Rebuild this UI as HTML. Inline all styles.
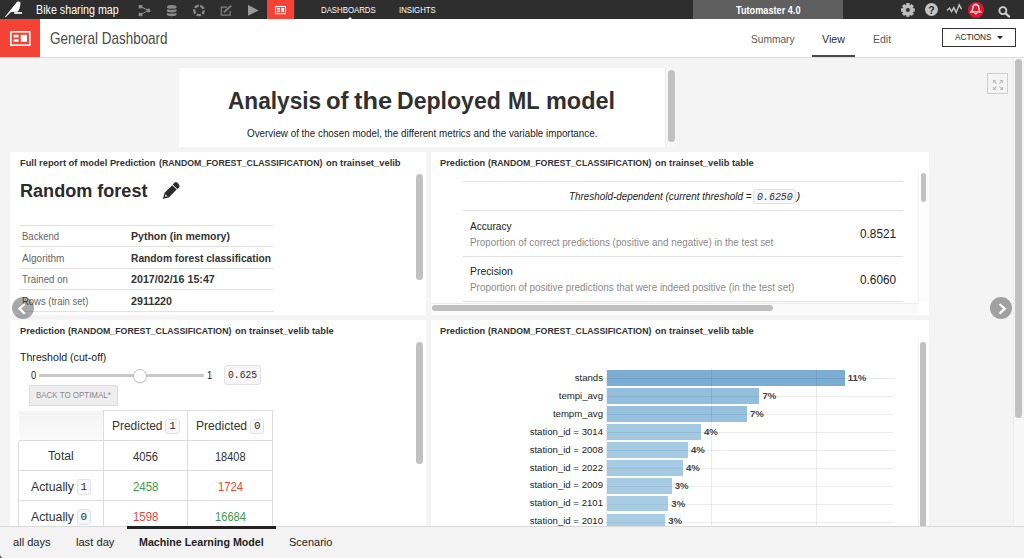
<!DOCTYPE html>
<html lang="en"><head><meta charset="utf-8"><title>General Dashboard - Bike sharing map</title>
<style>
html,body{margin:0;padding:0}
body{width:1024px;height:558px;overflow:hidden;position:relative;background:#f4f4f4;font-family:"Liberation Sans",sans-serif;color:#333}
.t{position:absolute;white-space:nowrap;line-height:1;display:block}
.abs,.hl,.hl2,.hl3,.vl,.vl3,.bar,.tile,.sb,.code,.cmbg{position:absolute}
#topbar{position:absolute;left:0;top:0;width:1024px;height:19px;background:#2e2e2e}
#hdr{position:absolute;left:0;top:19px;width:1024px;height:38px;background:#fff;border-bottom:1px solid #dcdcdc}
.tile{background:#fff}
.hl{height:1px;background:#e2e2e2;margin-top:-.5px}
.hl2{height:1px;background:#ebebeb}
.vl{width:1px;background:rgba(0,0,0,.08)}
.hl3{height:1px;background:#ddd;margin-top:-.5px}
.vl3{width:1px;background:#ddd;margin-left:-.5px}
.bar{height:15.7px}
.bar i{position:absolute;left:0;right:0;top:8.1px;height:1px;background:rgba(0,0,40,.06)}
.sb{background:#c1c1c1;border-radius:4px}
.code{background:#f7f7f9;border:1px solid #e1e1e8;border-radius:3px;box-sizing:border-box}
.cmbg{background:linear-gradient(#f4f4f4,#fafafa)}
svg{position:absolute;overflow:visible}
</style></head><body>

<!-- ===== main content ===== -->
<div id="main">
 <div class="tile" style="left:179px;top:68px;width:486px;height:79px"></div>
 <div class="abs" style="left:665px;top:68px;width:12px;height:79px;background:#f6f6f6;border-left:1px solid #ececec;box-sizing:border-box"></div>
 <div class="sb" style="left:668px;top:70px;width:6.5px;height:72px"></div>
 <span class="t" style='left:228.00px;top:89.93px;font-size:23px;font-weight:700;color:#303030;transform:scaleX(0.9840);transform-origin:0 50%;'>Analysis</span><span class="t" style='left:326.10px;top:89.93px;font-size:23px;font-weight:700;color:#303030;transform:scaleX(1.0406);transform-origin:0 50%;'>of</span><span class="t" style='left:353.70px;top:89.93px;font-size:23px;font-weight:700;color:#303030;transform:scaleX(1.1043);transform-origin:0 50%;'>the</span><span class="t" style='left:397.20px;top:89.93px;font-size:23px;font-weight:700;color:#303030;transform:scaleX(1.0036);transform-origin:0 50%;'>Deployed</span><span class="t" style='left:508.10px;top:89.93px;font-size:23px;font-weight:700;color:#303030;transform:scaleX(0.9513);transform-origin:0 50%;'>ML</span><span class="t" style='left:546.10px;top:89.93px;font-size:23px;font-weight:700;color:#303030;transform:scaleX(1.0202);transform-origin:0 50%;'>model</span>
 <span class="t" style='left:247.00px;top:127.89px;font-size:11px;color:#222;transform:scaleX(0.8931);transform-origin:0 50%;'>Overview of the chosen model, the different metrics and the variable importance.</span>

 <!-- fullscreen button -->
 <div class="abs" style="left:987px;top:73px;width:21px;height:21px;border:1px solid #cfcfcf;box-sizing:border-box"></div>
 <svg style="left:992.6px;top:79.6px" width="10" height="10" viewBox="0 0 10 10" fill="none" stroke="#bdbdbd" stroke-width="1.1"><path d="M0.5 3V0.5H3M0.5 0.5L3.6 3.6M7 0.5H9.5V3M9.5 0.5L6.4 3.6M0.5 7V9.5H3M0.5 9.5L3.6 6.4M7 9.5H9.5V7M9.5 9.5L6.4 6.4"/></svg>

 <!-- tile 1 -->
 <div class="tile" style="left:10.3px;top:152px;width:415.7px;height:163px"></div>
 <span class="t" style='left:19.80px;top:158.00px;font-size:9.8px;font-weight:700;transform:scaleX(0.9494);transform-origin:0 50%;'>Full report of model Prediction</span><span class="t" style='left:158.90px;top:158.00px;font-size:9.8px;font-weight:700;transform:scaleX(0.8943);transform-origin:0 50%;'>(RANDOM_FOREST_CLASSIFICATION)</span><span class="t" style='left:326.10px;top:158.00px;font-size:9.8px;font-weight:700;transform:scaleX(0.9581);transform-origin:0 50%;'>on trainset_velib</span>
 <span class="t" style='left:19.60px;top:182.50px;font-size:17.6px;font-weight:700;color:#2b2b2b;transform:scaleX(1.0269);transform-origin:0 50%;'>Random forest</span>
 <svg style="left:155px;top:175px" width="30" height="30" viewBox="155 175 30 30"><g transform="translate(162.9,198.9) rotate(-45)" fill="#2b2b2b"><path d="M0 0L5.6 -3.15H16.3V3.15H5.6Z"/><path d="M17.1 -3.15H19.6Q21.6 -3.15 21.6 -1.15V1.15Q21.6 3.15 19.6 3.15H17.1Z"/><path d="M2.9 0L5.2 -1.3V1.3Z" fill="#fff"/></g></svg>
 <div class="hl" style="left:19px;top:225.0px;width:254.5px"></div><span class="t" style='left:22.00px;top:231.19px;font-size:11px;color:#666;transform:scaleX(0.8666);transform-origin:0 50%;'>Backend</span><span class="t" style='left:130.50px;top:231.19px;font-size:11px;font-weight:700;transform:scaleX(0.9584);transform-origin:0 50%;'>Python (in memory)</span><div class="hl" style="left:19px;top:246.4px;width:254.5px"></div><span class="t" style='left:22.00px;top:252.59px;font-size:11px;color:#666;transform:scaleX(0.9146);transform-origin:0 50%;'>Algorithm</span><span class="t" style='left:130.50px;top:252.59px;font-size:11px;font-weight:700;transform:scaleX(0.9317);transform-origin:0 50%;'>Random forest classification</span><div class="hl" style="left:19px;top:268.0px;width:254.5px"></div><span class="t" style='left:22.00px;top:274.19px;font-size:11px;color:#666;transform:scaleX(0.8814);transform-origin:0 50%;'>Trained on</span><span class="t" style='left:130.50px;top:274.19px;font-size:11px;font-weight:700;transform:scaleX(0.9716);transform-origin:0 50%;'>2017/02/16 15:47</span><div class="hl" style="left:19px;top:289.5px;width:254.5px"></div><span class="t" style='left:22.00px;top:295.69px;font-size:11px;color:#666;transform:scaleX(0.8607);transform-origin:0 50%;'>Rows (train set)</span><span class="t" style='left:130.50px;top:295.69px;font-size:11px;font-weight:700;transform:scaleX(0.9711);transform-origin:0 50%;'>2911220</span><div class="hl" style="left:19px;top:311.2px;width:254.5px"></div>
 <div class="sb" style="left:416px;top:173.5px;width:6.5px;height:106px"></div>

 <!-- tile 2 -->
 <div class="tile" style="left:431px;top:152px;width:498.3px;height:163px"></div>
 <span class="t" style='left:439.90px;top:158.10px;font-size:9.8px;font-weight:700;transform:scaleX(0.9435);transform-origin:0 50%;'>Prediction</span><span class="t" style='left:488.30px;top:158.10px;font-size:9.8px;font-weight:700;transform:scaleX(0.8943);transform-origin:0 50%;'>(RANDOM_FOREST_CLASSIFICATION)</span><span class="t" style='left:655.40px;top:158.10px;font-size:9.8px;font-weight:700;transform:scaleX(0.9550);transform-origin:0 50%;'>on trainset_velib table</span>
 <div class="hl" style="left:463px;top:181px;width:440px"></div>
 <div class="hl" style="left:463px;top:210.3px;width:440px"></div>
 <div class="hl" style="left:463px;top:256.4px;width:440px"></div>
 <div class="hl" style="left:463px;top:301.9px;width:440px"></div>
 <span class="t" style='left:568.60px;top:190.79px;font-size:11px;color:#222;font-style:italic;transform:scaleX(0.8971);transform-origin:0 50%;'>Threshold-dependent (current threshold =</span>
 <span class="code" style="left:753.4px;top:188.5px;width:42.2px;height:15.8px"></span>
 <span class="t" style='left:757.00px;top:191.59px;font-size:11px;color:#2e2e2e;font-style:italic;font-family:"Liberation Mono", monospace;transform:scaleX(0.9038);transform-origin:0 50%;'>0.6250</span><span class="t" style='left:796.50px;top:190.79px;font-size:11px;color:#222;font-style:italic;'>)</span>
 <span class="t" style='left:469.80px;top:221.09px;font-size:11px;color:#222;transform:scaleX(0.9171);transform-origin:0 50%;'>Accuracy</span><span class="t" style='left:470.00px;top:237.63px;font-size:10px;color:#8a8a8a;transform:scaleX(0.9867);transform-origin:0 50%;'>Proportion of correct predictions (positive and negative) in the test set</span><span class="t" style='left:859.80px;top:228.32px;font-size:12.5px;color:#222;transform:scaleX(0.9442);transform-origin:0 50%;'>0.8521</span>
 <span class="t" style='left:469.80px;top:266.49px;font-size:11px;color:#222;transform:scaleX(0.9436);transform-origin:0 50%;'>Precision</span><span class="t" style='left:470.00px;top:282.94px;font-size:10px;color:#8a8a8a;transform:scaleX(0.9902);transform-origin:0 50%;'>Proportion of positive predictions that were indeed positive (in the test set)</span><span class="t" style='left:859.80px;top:273.72px;font-size:12.5px;color:#222;transform:scaleX(0.9442);transform-origin:0 50%;'>0.6060</span>
 <div class="abs" style="left:917.5px;top:172px;width:11.5px;height:131px;background:#fdfdfd;border-left:1px solid #f0f0f0;box-sizing:border-box"></div>
 <div class="sb" style="left:920.8px;top:173.2px;width:5.5px;height:29px"></div>
 <div class="abs" style="left:431px;top:302.6px;width:487px;height:11.4px;background:#f9f9f9;border-top:1px solid #ececec;box-sizing:border-box"></div>
 <div class="sb" style="left:432.3px;top:304.8px;width:340.5px;height:6.6px;background:#bfbfbf"></div>

 <!-- tile 3 -->
 <div class="tile" style="left:10.3px;top:320.2px;width:415.7px;height:207px"></div>
 <span class="t" style='left:19.90px;top:325.70px;font-size:9.8px;font-weight:700;transform:scaleX(0.9435);transform-origin:0 50%;'>Prediction</span><span class="t" style='left:68.30px;top:325.70px;font-size:9.8px;font-weight:700;transform:scaleX(0.8943);transform-origin:0 50%;'>(RANDOM_FOREST_CLASSIFICATION)</span><span class="t" style='left:235.40px;top:325.70px;font-size:9.8px;font-weight:700;transform:scaleX(0.9550);transform-origin:0 50%;'>on trainset_velib table</span>
 <span class="t" style='left:20.00px;top:351.82px;font-size:11.2px;color:#222;transform:scaleX(0.9473);transform-origin:0 50%;'>Threshold (cut-off)</span>
 <span class="t" style='left:30.60px;top:371.34px;font-size:10px;color:#222;transform:scaleX(0.9348);transform-origin:0 50%;'>0</span><span class="t" style='left:206.80px;top:371.34px;font-size:10px;color:#222;transform:scaleX(0.9348);transform-origin:0 50%;'>1</span>
 <div class="abs" style="left:38.9px;top:374.4px;width:165.3px;height:2.6px;background:#c8c8c8;border-radius:1px"></div>
 <div class="abs" style="left:133.3px;top:369.1px;width:13.5px;height:13.5px;border-radius:50%;background:#fff;border:1px solid #c4c4c4;box-sizing:border-box;box-shadow:0 0.5px 1px rgba(0,0,0,.15)"></div>
 <span class="code" style="left:224.4px;top:365px;width:36.3px;height:20px"></span>
 <span class="t" style='left:228.10px;top:370.29px;font-size:11px;color:#2e2e2e;font-family:"Liberation Mono", monospace;transform:scaleX(0.8844);transform-origin:0 50%;'>0.625</span>
 <div class="abs" style="left:29.2px;top:385.3px;width:88.4px;height:20.4px;background:#eee;border:1px solid #ddd;box-sizing:border-box"></div>
 <span class="t" style='left:35.60px;top:391.38px;font-size:9px;color:#8a8a8a;transform:scaleX(0.8831);transform-origin:0 50%;'>BACK TO OPTIMAL*</span>
 <div class="cmbg" style="left:18.9px;top:410.6px;width:84.4px;height:30px"></div><div class="hl3" style="left:103.5px;top:410.3px;width:170.0px"></div><div class="hl3" style="left:18.6px;top:440.4px;width:254.9px"></div><div class="hl3" style="left:18.6px;top:470.4px;width:254.9px"></div><div class="hl3" style="left:18.6px;top:500.5px;width:254.9px"></div><div class="vl3" style="left:18.6px;top:440.5px;height:89.5px"></div><div class="vl3" style="left:103.5px;top:410.3px;height:119.7px"></div><div class="vl3" style="left:187.8px;top:410.3px;height:119.7px"></div><div class="vl3" style="left:272.5px;top:410.3px;height:119.7px"></div><span class="t" style='left:112.00px;top:419.72px;font-size:12.5px;transform:scaleX(0.9562);transform-origin:0 50%;'>Predicted</span><span class="code" style="left:165.4px;top:418.8px;width:14.2px;height:15.6px"></span><span class="t" style='left:169.20px;top:421.39px;font-size:11px;color:#2e2e2e;font-family:"Liberation Mono", monospace;'>1</span><span class="t" style='left:196.10px;top:419.72px;font-size:12.5px;transform:scaleX(0.9676);transform-origin:0 50%;'>Predicted</span><span class="code" style="left:250.2px;top:418.8px;width:14.2px;height:15.6px"></span><span class="t" style='left:254.00px;top:421.39px;font-size:11px;color:#2e2e2e;font-family:"Liberation Mono", monospace;'>0</span><span class="t" style='left:47.90px;top:450.22px;font-size:12.5px;transform:scaleX(0.9770);transform-origin:0 50%;'>Total</span><span class="t" style='left:133.30px;top:450.57px;font-size:12.2px;transform:scaleX(0.9217);transform-origin:0 50%;'>4056</span><span class="t" style='left:215.30px;top:450.57px;font-size:12.2px;transform:scaleX(0.9000);transform-origin:0 50%;'>18408</span><span class="t" style='left:31.00px;top:480.62px;font-size:12.5px;transform:scaleX(0.9822);transform-origin:0 50%;'>Actually</span><span class="code" style="left:76.8px;top:479.0px;width:14.2px;height:15.6px"></span><span class="t" style='left:80.60px;top:481.59px;font-size:11px;color:#2e2e2e;font-family:"Liberation Mono", monospace;'>1</span><span class="t" style='left:133.00px;top:480.97px;font-size:12.2px;color:#3a9d4b;transform:scaleX(0.9401);transform-origin:0 50%;'>2458</span><span class="t" style='left:218.00px;top:480.97px;font-size:12.2px;color:#ea463b;transform:scaleX(0.9217);transform-origin:0 50%;'>1724</span><span class="t" style='left:31.00px;top:511.12px;font-size:12.5px;transform:scaleX(0.9822);transform-origin:0 50%;'>Actually</span><span class="code" style="left:76.8px;top:509.4px;width:14.2px;height:15.6px"></span><span class="t" style='left:80.60px;top:511.99px;font-size:11px;color:#2e2e2e;font-family:"Liberation Mono", monospace;'>0</span><span class="t" style='left:133.00px;top:511.47px;font-size:12.2px;color:#ea463b;transform:scaleX(0.9401);transform-origin:0 50%;'>1598</span><span class="t" style='left:215.00px;top:511.47px;font-size:12.2px;color:#3a9d4b;transform:scaleX(0.9147);transform-origin:0 50%;'>16684</span>
 <div class="sb" style="left:416px;top:341.5px;width:6.5px;height:122.5px"></div>

 <!-- tile 4 -->
 <div class="tile" style="left:431px;top:320.2px;width:498.3px;height:207px"></div>
 <span class="t" style='left:439.90px;top:325.70px;font-size:9.8px;font-weight:700;transform:scaleX(0.9435);transform-origin:0 50%;'>Prediction</span><span class="t" style='left:488.30px;top:325.70px;font-size:9.8px;font-weight:700;transform:scaleX(0.8943);transform-origin:0 50%;'>(RANDOM_FOREST_CLASSIFICATION)</span><span class="t" style='left:655.40px;top:325.70px;font-size:9.8px;font-weight:700;transform:scaleX(0.9550);transform-origin:0 50%;'>on trainset_velib table</span>
 <div class="hl2" style="left:607px;top:378.2px;width:286px"></div><div class="bar" style="left:607.3px;top:370.20px;width:237.4px;background:#7badd3"><i></i></div><span class="t" style='right:421.00px;top:372.82px;font-size:9.6px;color:#222;'>stands</span><span class="t" style='left:847.70px;top:372.92px;font-size:9.6px;font-weight:700;color:#444;'>11%</span><div class="hl2" style="left:607px;top:396.2px;width:286px"></div><div class="bar" style="left:607.3px;top:388.14px;width:152.2px;background:#93bedd"><i></i></div><span class="t" style='right:421.00px;top:390.76px;font-size:9.6px;color:#222;'>tempi_avg</span><span class="t" style='left:762.50px;top:390.86px;font-size:9.6px;font-weight:700;color:#444;'>7%</span><div class="hl2" style="left:607px;top:414.1px;width:286px"></div><div class="bar" style="left:607.3px;top:406.08px;width:139.6px;background:#96c0de"><i></i></div><span class="t" style='right:421.00px;top:408.70px;font-size:9.6px;color:#222;'>tempm_avg</span><span class="t" style='left:749.90px;top:408.80px;font-size:9.6px;font-weight:700;color:#444;'>7%</span><div class="hl2" style="left:607px;top:432.1px;width:286px"></div><div class="bar" style="left:607.3px;top:424.02px;width:93.7px;background:#a2c8e2"><i></i></div><span class="t" style='right:421.00px;top:426.64px;font-size:9.6px;color:#222;'>station_id = 3014</span><span class="t" style='left:704.00px;top:426.74px;font-size:9.6px;font-weight:700;color:#444;'>4%</span><div class="hl2" style="left:607px;top:450.0px;width:286px"></div><div class="bar" style="left:607.3px;top:441.96px;width:80.7px;background:#a4c9e3"><i></i></div><span class="t" style='right:421.00px;top:444.58px;font-size:9.6px;color:#222;'>station_id = 2008</span><span class="t" style='left:691.00px;top:444.68px;font-size:9.6px;font-weight:700;color:#444;'>4%</span><div class="hl2" style="left:607px;top:467.9px;width:286px"></div><div class="bar" style="left:607.3px;top:459.90px;width:75.6px;background:#a5cae3"><i></i></div><span class="t" style='right:421.00px;top:462.52px;font-size:9.6px;color:#222;'>station_id = 2022</span><span class="t" style='left:685.90px;top:462.62px;font-size:9.6px;font-weight:700;color:#444;'>4%</span><div class="hl2" style="left:607px;top:485.9px;width:286px"></div><div class="bar" style="left:607.3px;top:477.84px;width:64.4px;background:#a7cbe4"><i></i></div><span class="t" style='right:421.00px;top:480.46px;font-size:9.6px;color:#222;'>station_id = 2009</span><span class="t" style='left:674.70px;top:480.56px;font-size:9.6px;font-weight:700;color:#444;'>3%</span><div class="hl2" style="left:607px;top:503.8px;width:286px"></div><div class="bar" style="left:607.3px;top:495.78px;width:61.0px;background:#a8cce4"><i></i></div><span class="t" style='right:421.00px;top:498.40px;font-size:9.6px;color:#222;'>station_id = 2101</span><span class="t" style='left:671.30px;top:498.50px;font-size:9.6px;font-weight:700;color:#444;'>3%</span><div class="hl2" style="left:607px;top:521.8px;width:286px"></div><div class="bar" style="left:607.3px;top:513.72px;width:57.9px;background:#a8cce4"><i></i></div><span class="t" style='right:421.00px;top:516.34px;font-size:9.6px;color:#222;'>station_id = 2010</span><span class="t" style='left:668.20px;top:516.44px;font-size:9.6px;font-weight:700;color:#444;'>3%</span><div class="vl" style="left:606px;top:368px;height:160px"></div><div class="vl" style="left:711px;top:368px;height:160px"></div><div class="vl" style="left:816px;top:368px;height:160px"></div>
 <div class="abs" style="left:917.5px;top:340px;width:11.5px;height:188px;background:#fdfdfd;border-left:1px solid #f0f0f0;box-sizing:border-box"></div>
 <div class="sb" style="left:920.3px;top:341.8px;width:6px;height:200px"></div>

 <!-- nav arrows -->
 <div class="abs" style="left:12.2px;top:296.7px;width:22.2px;height:22.2px;border-radius:50%;background:rgba(0,0,0,.34)"></div>
 <svg style="left:12.2px;top:296.7px" width="22.2" height="22.2" viewBox="0 0 22 22" fill="none" stroke="#fff" stroke-width="2.2"><path d="M12.6 6.9L7.4 11.7L12.6 16.5"/></svg>
 <div class="abs" style="left:989.6px;top:296.7px;width:22.2px;height:22.2px;border-radius:50%;background:rgba(0,0,0,.34)"></div>
 <svg style="left:989.6px;top:296.7px" width="22.2" height="22.2" viewBox="0 0 22 22" fill="none" stroke="#fff" stroke-width="2.2"><path d="M9.4 6.9L14.6 11.7L9.4 16.5"/></svg>

 <!-- page scrollbar -->
 <div class="abs" style="left:1013px;top:58px;width:11px;height:469px;background:#f7f7f7;border-left:1px solid #ececec;box-sizing:border-box"></div>
 <div class="sb" style="left:1015.3px;top:58.5px;width:6.4px;height:359px"></div>
</div>

<!-- ===== bottom tabs ===== -->
<div id="tabs" class="abs" style="left:0;top:526px;width:1024px;height:32px;background:#f3f3f3;border-top:1px solid #d9d9d9;box-sizing:border-box"></div>
<div class="abs" style="left:127.2px;top:526.2px;width:148.6px;height:2.6px;background:#222"></div>
<span class="t" style='left:13.00px;top:537.22px;font-size:11.2px;color:#222;transform:scaleX(0.9911);transform-origin:0 50%;'>all days</span><span class="t" style='left:75.90px;top:537.22px;font-size:11.2px;color:#222;'>last day</span><span class="t" style='left:139.40px;top:537.22px;font-size:11.2px;font-weight:700;color:#222;transform:scaleX(0.9560);transform-origin:0 50%;'>Machine Learning Model</span><span class="t" style='left:288.80px;top:537.22px;font-size:11.2px;color:#222;transform:scaleX(0.9829);transform-origin:0 50%;'>Scenario</span>

<svg style="left:0;top:553px" width="5" height="5" viewBox="0 0 5 5"><path d="M0 1.8Q0.4 4.6 2.6 5H0Z" fill="#4a382e"/></svg>
<!-- ===== top bar ===== -->
<div id="topbar"></div>
<svg style="left:0;top:0" width="24" height="19" viewBox="0 0 24 19"><path fill="#fff" d="M18 1.5Q19.7 1.3 20.5 2.7L20.2 5.4Q19.8 9.2 17.8 11.7L11 11.9L5.7 17.2L5 16.8L16.5 2.5Q17.1 1.7 18 1.5Z"/><rect x="14.2" y="12.1" width="7.8" height="1.8" fill="#f4f4f4"/></svg>
<span class="t" style='left:35.80px;top:3.84px;font-size:12px;color:#fff;transform:scaleX(0.8930);transform-origin:0 50%;'>Bike sharing map</span>
<svg style="left:0;top:0" width="320" height="19" viewBox="0 0 320 19">
 <g fill="#8a8a8a"><path d="M140.5 6.6L148.5 10.4L140.5 14.5" fill="none" stroke="#8a8a8a" stroke-width="1"/><rect x="138.7" y="5" width="3.7" height="3.4"/><rect x="138.7" y="12.8" width="3.7" height="3.4"/><circle cx="148.5" cy="10.4" r="1.9"/></g>
 <g fill="#8a8a8a"><path d="M167 6.6Q167 5 171.7 5Q176.5 5 176.5 6.6V7.4Q176.5 8.8 171.7 8.8Q167 8.8 167 7.4Z"/><path d="M167 9.2Q171.7 10.6 176.5 9.2V11.1Q176.5 12.5 171.7 12.5Q167 12.5 167 11.1Z"/><path d="M167 12.9Q171.7 14.3 176.5 12.9V14.8Q176.5 16.2 171.7 16.2Q167 16.2 167 14.8Z"/></g>
 <circle cx="199" cy="10.4" r="4.75" fill="none" stroke="#8a8a8a" stroke-width="2.3" stroke-dasharray="4.45 1.52" stroke-dashoffset="0.75"/>
 <g fill="none" stroke="#808080"><path d="M230.1 11V15.2H221.3V7.2H227" stroke-width="1.2"/><path d="M223.8 12.4L231.2 5.6" stroke-width="1.9"/></g>
 <path d="M248 5L258.6 10.4L248 15.8Z" fill="#999"/>
 <rect x="267" y="0" width="27.2" height="19" fill="#f44336"/>
 <g fill="#fff"><rect x="275.6" y="6.5" width="9.8" height="7.2" fill="none" stroke="#fff" stroke-width="1"/><rect x="277.1" y="7.9" width="2.9" height="1.6"/><rect x="277.1" y="10.6" width="2.9" height="1.5"/><rect x="281.3" y="7.9" width="2.6" height="4.2"/></g>
</svg>
<span class="t" style='left:320.90px;top:5.91px;font-size:9.2px;color:#fff;transform:scaleX(0.8503);transform-origin:0 50%;'>DASHBOARDS</span><span class="t" style='left:398.60px;top:5.91px;font-size:9.2px;color:#fff;transform:scaleX(0.8458);transform-origin:0 50%;'>INSIGHTS</span>
<svg style="left:347px;top:16.5px" width="6" height="3" viewBox="0 0 6 3"><path d="M0 3L3 0L6 3Z" fill="#fff"/></svg>
<div class="abs" style="left:693px;top:0;width:150px;height:19px;background:#5f5f5f"></div>
<span class="t" style='left:736.00px;top:5.31px;font-size:10.5px;font-weight:700;color:#fff;transform:scaleX(0.8725);transform-origin:0 50%;'>Tutomaster 4.0</span>
<!-- gear -->
<svg style="left:901.2px;top:2.9px" width="13.8" height="13.8" viewBox="-6.9 -6.9 13.8 13.8"><g fill="#bdbdbd"><circle r="5.3"/><rect x="-1.75" y="-6.9" width="3.5" height="13.8" rx=".5" transform="rotate(0)"/><rect x="-1.75" y="-6.9" width="3.5" height="13.8" rx=".5" transform="rotate(45)"/><rect x="-1.75" y="-6.9" width="3.5" height="13.8" rx=".5" transform="rotate(90)"/><rect x="-1.75" y="-6.9" width="3.5" height="13.8" rx=".5" transform="rotate(135)"/></g><circle r="2" fill="#2e2e2e"/></svg>
<!-- help -->
<div class="abs" style="left:924.6px;top:3.1px;width:13.4px;height:13.4px;border-radius:50%;background:#c4c4c4"></div>
<span class="t" style='left:928.20px;top:5.21px;font-size:10.5px;font-weight:700;color:#2e2e2e;'>?</span>
<!-- activity -->
<svg style="left:947px;top:4.1px" width="15" height="10" viewBox="0 0 15 10" fill="none" stroke="#c4c4c4" stroke-width="1.4" stroke-linejoin="miter"><path d="M0 6.5L2.6 4.2L4.6 7.6L6.8 3.6L9.2 8.6L12.2 0.8L14.6 5.2"/></svg>
<!-- bell -->
<div class="abs" style="left:968px;top:1.6px;width:16.2px;height:16.2px;border-radius:50%;background:#e5132e"></div>
<svg style="left:970.4px;top:3.2px" width="11.6" height="12" viewBox="0 0 11.6 12" fill="none" stroke="#fff" stroke-width="1.25"><path d="M1 9Q2.9 7.4 2.9 4.6Q2.9 1.7 5.8 1.7Q8.7 1.7 8.7 4.6Q8.7 7.4 10.6 9Z"/><path d="M5.8 1.7V0.5"/><path d="M4.5 10.1Q5.8 11.8 7.1 10.1"/></svg>
<!-- search -->
<svg style="left:997.6px;top:6px" width="13" height="12" viewBox="0 0 13 12" fill="none" stroke="#d0d0d0"><circle cx="4.9" cy="4.6" r="3.5" stroke-width="1.9"/><path d="M7.6 7.4L11.2 10.6" stroke-width="2.1" stroke-linecap="round"/></svg>

<!-- ===== header ===== -->
<div id="hdr"></div>
<div class="abs" style="left:0;top:19px;width:40px;height:38px;background:#f44336"></div>
<svg style="left:9.8px;top:30.7px" width="20.6" height="15" viewBox="0 0 20.6 15"><rect x="0.8" y="0.8" width="19" height="13.4" fill="none" stroke="#fff" stroke-width="1.6"/><rect x="3.6" y="3.8" width="5" height="2.6" fill="#fff"/><rect x="3.6" y="8.2" width="5" height="2.6" fill="#fff"/><rect x="10.8" y="3.8" width="6.2" height="7" fill="#fff"/></svg>
<span class="t" style='left:49.60px;top:30.61px;font-size:15.7px;color:#4a4a4a;transform:scaleX(0.8589);transform-origin:0 50%;'>General Dashboard</span>
<span class="t" style='left:751.00px;top:33.64px;font-size:10.7px;color:#5a5a5a;transform:scaleX(0.9533);transform-origin:0 50%;'>Summary</span><span class="t" style='left:821.90px;top:33.64px;font-size:10.7px;color:#2a2a2a;transform:scaleX(0.9963);transform-origin:0 50%;'>View</span><span class="t" style='left:872.70px;top:33.64px;font-size:10.7px;color:#5a5a5a;transform:scaleX(0.9825);transform-origin:0 50%;'>Edit</span>
<div class="abs" style="left:811.8px;top:55.4px;width:43.2px;height:2.1px;background:#4a4a4a"></div>
<div class="abs" style="left:941.6px;top:28px;width:74.6px;height:18.8px;border:1px solid #333;box-sizing:border-box;background:#fff"></div>
<span class="t" style='left:954.80px;top:33.48px;font-size:9px;color:#222;transform:scaleX(0.9121);transform-origin:0 50%;'>ACTIONS</span>
<svg style="left:997px;top:36px" width="6" height="3.2" viewBox="0 0 6 3.2"><path d="M0 0H6L3 3.2Z" fill="#222"/></svg>
</body></html>
